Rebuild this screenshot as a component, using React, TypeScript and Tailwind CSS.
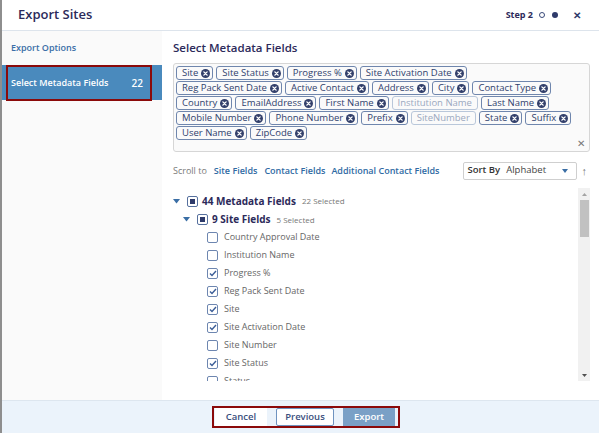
import React from 'react';

type Tag = { label: string; disabled?: boolean };

const tagRows: Tag[] = [
  { label: 'Site' },
  { label: 'Site Status' },
  { label: 'Progress %' },
  { label: 'Site Activation Date' },
  { label: 'Reg Pack Sent Date' },
  { label: 'Active Contact' },
  { label: 'Address' },
  { label: 'City' },
  { label: 'Contact Type' },
  { label: 'Country' },
  { label: 'EmailAddress' },
  { label: 'First Name' },
  { label: 'Institution Name', disabled: true },
  { label: 'Last Name' },
  { label: 'Mobile Number' },
  { label: 'Phone Number' },
  { label: 'Prefix' },
  { label: 'SiteNumber', disabled: true },
  { label: 'State' },
  { label: 'Suffix' },
  { label: 'User Name' },
  { label: 'ZipCode' },
];

const siteFields = [
  { label: 'Country Approval Date', checked: false },
  { label: 'Institution Name', checked: false },
  { label: 'Progress %', checked: true },
  { label: 'Reg Pack Sent Date', checked: true },
  { label: 'Site', checked: true },
  { label: 'Site Activation Date', checked: true },
  { label: 'Site Number', checked: false },
  { label: 'Site Status', checked: true },
  { label: 'Status', checked: false },
];

const RemoveIcon = () => (
  <svg width="9" height="9" viewBox="0 0 10 10" className="shrink-0">
    <circle cx="5" cy="5" r="5" fill="#33406b" />
    <path d="M3.2 3.2 L6.8 6.8 M6.8 3.2 L3.2 6.8" stroke="white" strokeWidth="1.5" strokeLinecap="round" />
  </svg>
);

const Caret = () => (
  <svg width="7" height="5" viewBox="0 0 7 5">
    <path d="M0 0 L7 0 L3.5 4.5 Z" fill="#3a6ea5" />
  </svg>
);

const Checkbox = ({ checked }: { checked: boolean }) => (
  <div className="w-[11px] h-[11px] border-[1.5px] border-[#6d86b0] rounded-[2px] bg-white flex items-center justify-center shrink-0">
    {checked && (
      <svg width="8" height="7" viewBox="0 0 8 7">
        <path d="M1 3.5 L3 5.5 L7 1" stroke="#3b5d97" strokeWidth="1.4" fill="none" />
      </svg>
    )}
  </div>
);

const PartialBox = () => (
  <div className="w-[11px] h-[11px] border-[1.5px] border-[#56709e] rounded-[2px] bg-white flex items-center justify-center shrink-0">
    <div className="w-[5px] h-[5px] bg-[#2e3a6a]" />
  </div>
);

export default function App() {
  return (
    <div className="w-[599px] h-[433px] flex flex-col bg-white border-l-2 border-[#8e8e8e] overflow-hidden font-['Open_Sans',sans-serif]">
      {/* Header */}
      <div className="h-[31px] shrink-0 flex items-center justify-between pl-[16px] pr-[18px] border-b border-[#dde4ec]">
        <h1 className="text-[13px] font-semibold text-[#2c2a5a]">Export Sites</h1>
        <div className="flex items-center">
          <span className="text-[9px] font-bold text-[#2c2a5a]">Step 2</span>
          <span className="ml-[6px] w-[6px] h-[6px] rounded-full border border-[#3a4a7a]" />
          <span className="ml-[7px] w-[6px] h-[6px] rounded-full bg-[#2e3a6a]" />
          <span className="ml-[15px] text-[10px] font-bold text-[#2e3a6a] leading-none">✕</span>
        </div>
      </div>

      {/* Body */}
      <div className="flex flex-1 min-h-0">
        {/* Sidebar */}
        <div className="w-[160px] shrink-0 bg-[#fafafa] pt-[8px]">
          <div className="h-[18px] pl-[9px] flex items-center text-[9px] font-semibold text-[#3b6ea7]">Export Options</div>
          <div className="mt-[9px] h-[35px] bg-[#4a8abd] pl-[4px]">
            <div className="w-[146px] h-[36px] -mt-[1px] border-2 border-[#8b0a0a] flex items-center justify-between pl-[3px] pr-[7px] text-[9px] font-semibold text-white">
              <span>Select Metadata Fields</span>
              <span className="text-[10px]">22</span>
            </div>
          </div>
        </div>

        {/* Main */}
        <div className="flex-1 flex flex-col pl-[11px] pr-[9px] pt-[9px] min-w-0">
          <h2 className="h-[16px] flex items-center text-[11.5px] font-semibold text-[#2c2a5a]">Select Metadata Fields</h2>

          <div className="mt-[7px] h-[89px] border border-[#d6d6d6] rounded-[3px] bg-[#fafafa] relative pl-[2px] pt-[2px] pr-[16px]">
            <div className="flex flex-wrap gap-x-[3px] gap-y-[1px]">
              {tagRows.map((t) => (
                <div
                  key={t.label}
                  className={`h-[14px] flex items-center gap-[3px] rounded-[3px] border text-[9.5px] leading-none whitespace-nowrap ${
                    t.disabled
                      ? 'px-[5px] border-[#b9c7da] text-[#9aa8bf]'
                      : 'pl-[5px] pr-[2px] border-[#6f86ad] text-[#2f3f6d]'
                  }`}
                >
                  <span>{t.label}</span>
                  {!t.disabled && <RemoveIcon />}
                </div>
              ))}
            </div>
            <span className="absolute right-[4px] bottom-[0px] text-[10px] text-[#777]">✕</span>
          </div>

          {/* Scroll to / sort */}
          <div className="mt-[9px] h-[19px] flex items-center whitespace-nowrap">
            <span className="text-[9px] text-[#7a7a7a]">Scroll to</span>
            <span className="ml-[7px] text-[9px] font-semibold text-[#2f6aa3]">Site Fields</span>
            <span className="ml-[7px] text-[9px] font-semibold text-[#2f6aa3]">Contact Fields</span>
            <span className="ml-[6px] text-[9px] font-semibold text-[#2f6aa3]">Additional Contact Fields</span>
            <div className="ml-auto w-[114px] h-[18px] border border-[#cfcfcf] rounded-[2px] flex items-center pl-[4px] pr-[8px] text-[9.5px]">
              <span className="font-semibold text-[#333]">Sort By</span>
              <span className="ml-[6px] text-[#444]">Alphabet</span>
              <svg className="ml-auto" width="6" height="4" viewBox="0 0 6 4">
                <path d="M0 0 L6 0 L3 4 Z" fill="#3a6ea5" />
              </svg>
            </div>
            <span className="ml-[5px] mr-[3px] text-[11px] text-[#777] leading-none">↑</span>
          </div>

          {/* Tree */}
          <div className="mt-[8px] flex flex-1 min-h-0 pb-[19px]">
            <div className="flex-1 overflow-hidden pt-[3px]">
              <div className="h-[20px] flex items-center">
                <Caret />
                <div className="ml-[7px]"><PartialBox /></div>
                <span className="ml-[4px] text-[10px] font-bold text-[#2c2a5a]">44 Metadata Fields</span>
                <span className="ml-[6px] text-[8px] text-[#777]">22 Selected</span>
              </div>
              <div className="h-[17px] flex items-center pl-[10px]">
                <Caret />
                <div className="ml-[7px]"><PartialBox /></div>
                <span className="ml-[4px] text-[10px] font-bold text-[#2c2a5a]">9 Site Fields</span>
                <span className="ml-[6px] text-[8px] text-[#777]">5 Selected</span>
              </div>
              {siteFields.map((f) => (
                <div key={f.label} className="h-[18px] flex items-center pl-[34px]">
                  <Checkbox checked={f.checked} />
                  <span className="ml-[6px] text-[9px] text-[#666]">{f.label}</span>
                </div>
              ))}
            </div>
            <div className="w-[12px] shrink-0 bg-[#f1f1f1] flex flex-col items-center">
              <svg className="mt-[5px]" width="5" height="3" viewBox="0 0 5 3"><path d="M0 3 L5 3 L2.5 0 Z" fill="#a3a3a3" /></svg>
              <div className="mt-[4px] w-[9px] h-[37px] bg-[#c1c1c1]" />
              <svg className="mt-auto mb-[4px]" width="5" height="3" viewBox="0 0 5 3"><path d="M0 0 L5 0 L2.5 3 Z" fill="#505050" /></svg>
            </div>
          </div>
        </div>
      </div>

      {/* Footer */}
      <div className="h-[33px] shrink-0 bg-[#ebf3fb] border-t border-[#dde6ef] flex items-center justify-center pl-[11px]">
        <div className="w-[188px] h-[22px] border-2 border-[#8b0a0a] flex items-center gap-[9px] pl-[1px]">
          <button className="w-[52px] h-[18px] bg-white text-[9.5px] font-semibold text-[#3a4f7e]">Cancel</button>
          <button className="w-[58px] h-[18px] bg-white border border-[#6f93c0] rounded-[2px] text-[9.5px] font-semibold text-[#3a4f7e]">Previous</button>
          <button className="w-[52px] h-[18px] bg-[#7aa0c6] text-[9.5px] font-semibold text-white">Export</button>
        </div>
      </div>
    </div>
  );
}
